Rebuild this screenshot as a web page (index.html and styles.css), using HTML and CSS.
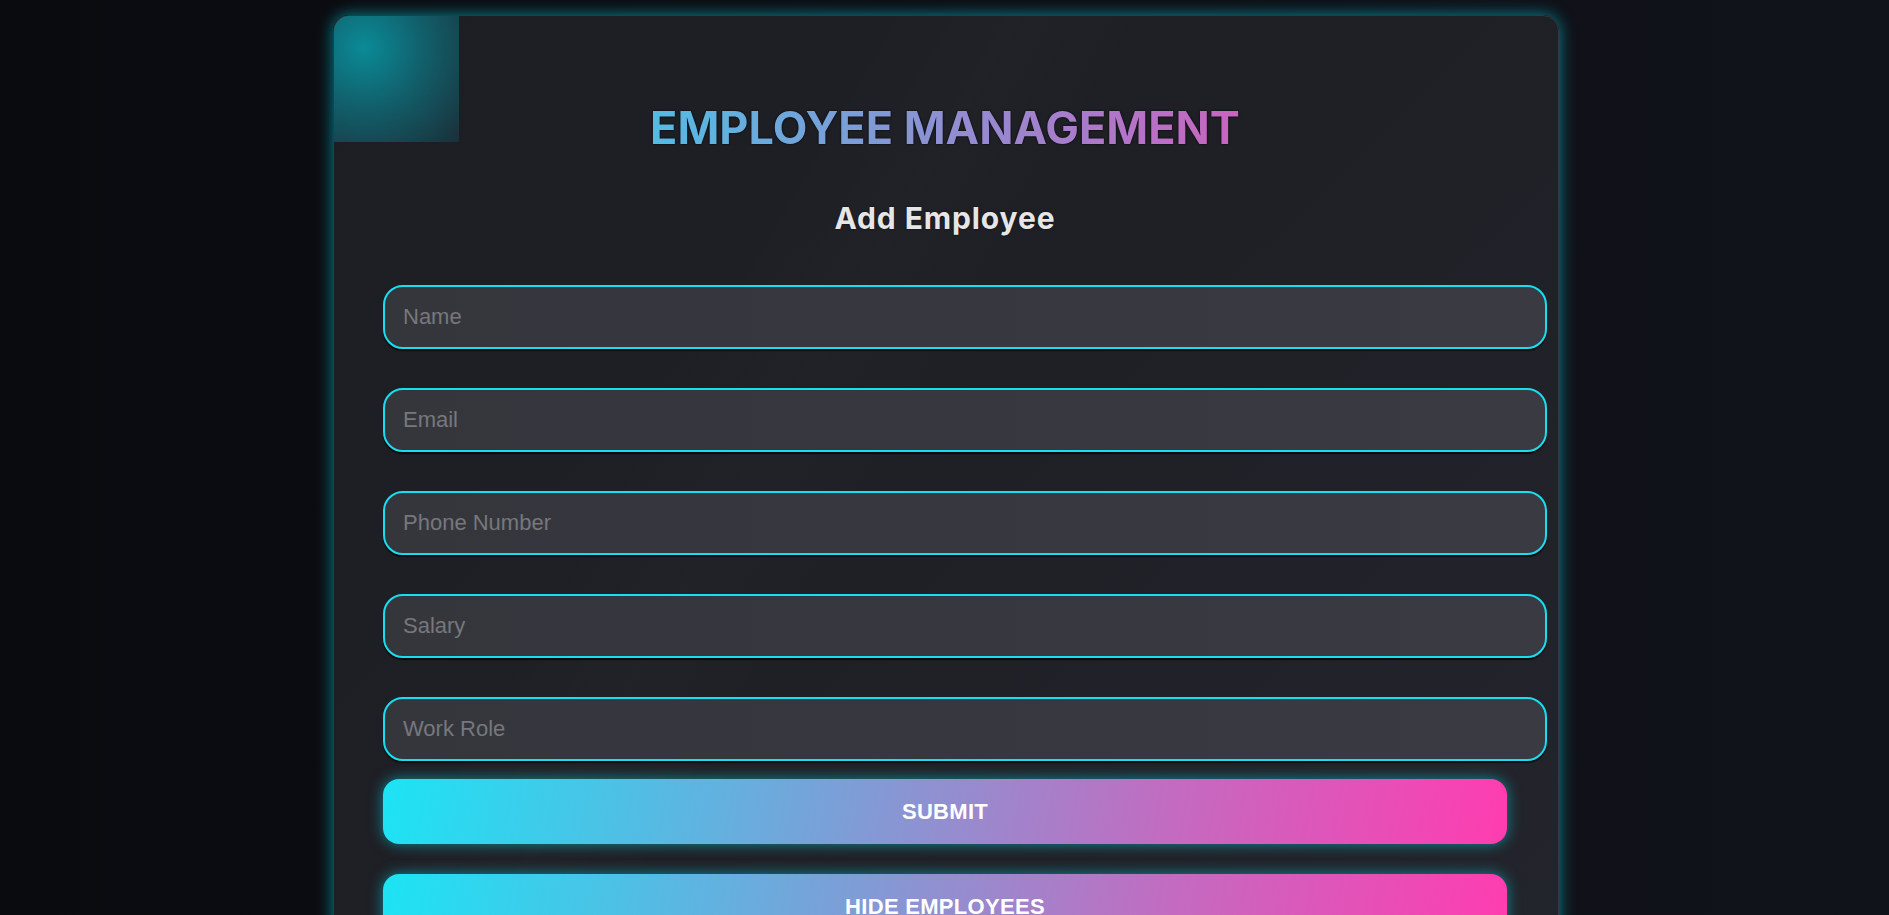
FILE: index.html
```html
<!DOCTYPE html>
<html lang="en">
<head>
<meta charset="UTF-8">
<title>Employee Management</title>
<link rel="stylesheet" href="styles.css">
</head>
<body>
  <main class="card">
    <h1 class="title">EMPLOYEE MANAGEMENT</h1>
    <h2 class="subtitle">Add Employee</h2>
    <form class="form">
      <input class="field" type="text" placeholder="Name">
      <input class="field" type="email" placeholder="Email">
      <input class="field" type="text" placeholder="Phone Number">
      <input class="field" type="text" placeholder="Salary">
      <input class="field" type="text" placeholder="Work Role">
      <div class="actions">
        <button class="btn" type="button">SUBMIT</button>
        <button class="btn" type="button">HIDE EMPLOYEES</button>
      </div>
    </form>
  </main>
</body>
</html>
```
FILE: styles.css
```css
html, body {
  margin: 0;
  padding: 0;
}
body {
  min-height: 100vh;
  background: linear-gradient(90deg, #0a0b0f 0%, #0d0e14 50%, #11131b 100%);
  display: flex;
  justify-content: center;
  align-items: flex-start;
  padding-top: 15px;
  font-family: "Liberation Sans", Arial, sans-serif;
}
.card {
  position: relative;
  box-sizing: border-box;
  width: 1226px;
  margin-left: 3px;
  padding: 0 51px 60px 49px;
  border-radius: 16px;
  border: 1px solid #34383e;
  background:
    linear-gradient(120deg, transparent 30%, rgba(255,255,255,0.012) 38%, transparent 46%),
    linear-gradient(135deg, #1d1e24 0%, #1f2026 50%, #23252c 100%);
  box-shadow: 0 0 16px rgba(0, 215, 235, 0.6);
  overflow: hidden;
}
.card::before {
  content: "";
  position: absolute;
  top: 0;
  left: 0;
  width: 125px;
  height: 126px;
  background: radial-gradient(circle at 24% 25%, rgba(0, 195, 210, 0.66) 0%, rgba(0, 185, 205, 0.42) 45%, rgba(0, 170, 200, 0.12) 100%);
}
.title {
  position: relative;
  margin: 85px 0 0;
  text-align: center;
  font-family: "Inter", "Noto Sans", sans-serif;
  font-weight: 700;
  font-size: 45px;
  line-height: 54px;
  letter-spacing: 0;
  background: linear-gradient(90deg, #1ee3f3 0%, #ff3cb0 100%);
  -webkit-background-clip: text;
  background-clip: text;
  color: transparent;
  filter: drop-shadow(0 0 1px rgba(0,0,0,0.9));
}
.subtitle {
  margin: 46px 0 0;
  text-align: center;
  font-family: "Inter", "Noto Sans", sans-serif;
  font-weight: 700;
  font-size: 30px;
  line-height: 35px;
  letter-spacing: 0.9px;
  color: #e6e6e6;
  text-shadow: 0 0 2px rgba(0,0,0,0.8);
}
.form {
  display: flex;
  flex-direction: column;
  margin-top: 49px;
}
.field {
  width: 100%;
  height: 60px;
  padding: 0 18px;
  margin: 0 0 39px;
  border: 2px solid #18def0;
  border-radius: 20px;
  background: linear-gradient(90deg, #35363c 0%, #393a42 100%);
  box-shadow: 0 2px 1px rgba(0, 0, 0, 0.7);
  color: #ddd;
  font-family: "Liberation Sans", Arial, sans-serif;
  font-size: 22px;
  outline: none;
}
.field:last-of-type {
  margin-bottom: 18px;
}
.field::placeholder {
  color: #77777d;
}
.actions {
  display: flex;
  flex-direction: column;
  gap: 30px;
}
.btn {
  height: 65px;
  width: 100%;
  border: none;
  border-radius: 16px;
  background: linear-gradient(100deg, #1ce4f4 0%, #7aa0d8 40%, #c36bc0 70%, #ff3cb0 100%);
  box-shadow: 0 0 14px rgba(0, 220, 240, 0.55);
  color: #ffffff;
  font-family: "Liberation Sans", Arial, sans-serif;
  font-weight: 700;
  font-size: 22px;
  letter-spacing: 0.3px;
  cursor: pointer;
}
```
